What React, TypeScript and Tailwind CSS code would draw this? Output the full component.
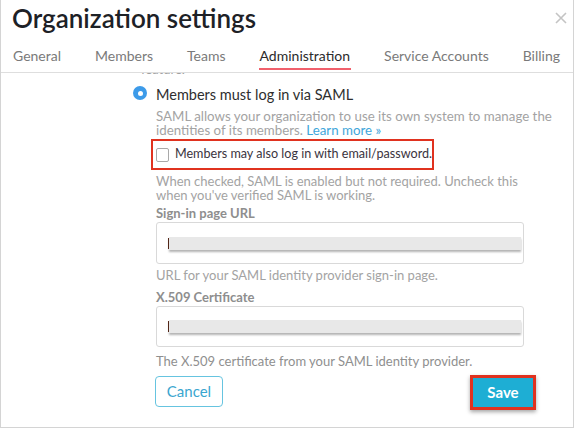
import React from "react";

function Redacted() {
  return (
    <div className="flex items-center h-full pl-[11px] pr-[2px]">
      <div className="w-[2px] h-[11px] bg-[#5a2a1a] mr-[-1px]" />
      <div className="flex-1 h-[13px] bg-[#e8e8e8] shadow-[0_2px_2px_rgba(0,0,0,0.3)] blur-[0.4px]" />
    </div>
  );
}

export default function App() {
  const tabs = ["General", "Members", "Teams", "Administration", "Service Accounts", "Billing"];
  return (
    <div className="w-[575px] h-[428px] bg-white overflow-hidden font-['Lato','Open_Sans',sans-serif]">
      <div className="w-[574px] h-[428px] border-l border-r border-b border-[#d4d4d4] flex flex-col">
        {/* header */}
        <div className="h-[40px] flex items-start justify-between pl-[11px] pr-[6px]">
          <h1 className="text-[26px] leading-[37px] font-semibold text-[#1d2126]">Organization settings</h1>
          <svg width="12" height="12" viewBox="0 0 12 12" className="mt-[12px]">
            <path d="M1 1 L11 11 M11 1 L1 11" stroke="#c4c4c4" strokeWidth="1.6" />
          </svg>
        </div>

        {/* tabs */}
        <div className="h-[33px] border-b border-[#dedede] flex items-start gap-[34px] pl-[12px] pt-[6px] text-[14px] text-[#7a7a7a]">
          {tabs.map((t) => (
            <div key={t} className={`relative leading-[20px] ${t === "Administration" ? "text-[#2b2b2b]" : ""}`}>
              {t}
              {t === "Administration" && (
                <div className="absolute left-[-1px] right-[-1px] top-[22px] h-[2px] bg-[#f0606c]" />
              )}
            </div>
          ))}
        </div>

        {/* scrolled content */}
        <div className="flex-1 overflow-hidden">
          <div className="pl-[140px] mt-[-11px] h-[14px] text-[13px] leading-[14px] text-[#a0a0a0]">feature.</div>

          <div className="flex mt-[9px]">
            <div className="w-[132px]" />
            <div className="w-[14px] h-[14px] rounded-full bg-[#3d9be9] flex items-center justify-center mt-[1px]">
              <div className="w-[5px] h-[5px] rounded-full bg-white" />
            </div>
            <div className="ml-[9px] w-[410px] flex flex-col">
              <div className="text-[14.5px] leading-[20px] text-[#2e2e2e]">Members must log in via SAML</div>
              <div className="mt-[4px] text-[13.3px] leading-[14px] text-[#a3a3a3]">
                SAML allows your organization to use its own system to manage the identities of its members.{" "}
                <span className="text-[#3fa6da]">Learn more »</span>
              </div>

              <div className="mt-[2px] ml-[-5px] w-[283px] h-[31px] border-[2.5px] border-[#e0321f] flex items-center pl-[3px]">
                <div className="w-[14px] h-[14px] border border-[#a9a9a9] rounded-[2px] bg-white" />
                <span className="ml-[6px] whitespace-nowrap text-[12.6px] text-[#3a3440]">Members may also log in with email/password.</span>
              </div>

              <div className="mt-[4px] w-[370px] text-[13px] leading-[14px] text-[#a3a3a3]">
                When checked, SAML is enabled but not required. Uncheck this when you've verified SAML is working.
              </div>

              <div className="mt-[4px] text-[13px] leading-[14px] font-bold text-[#8e8e8e]">Sign-in page URL</div>
              <div className="mt-[2px] w-[368px] h-[42px] border border-[#d9d9d9] rounded-[3px] bg-white">
                <Redacted />
              </div>
              <div className="mt-[4px] text-[13px] leading-[14px] text-[#a3a3a3]">URL for your SAML identity provider sign-in page.</div>

              <div className="mt-[8px] text-[13px] leading-[14px] font-bold text-[#8e8e8e]">X.509 Certificate</div>
              <div className="mt-[2px] w-[368px] h-[41px] border border-[#d9d9d9] rounded-[3px] bg-white">
                <Redacted />
              </div>
              <div className="mt-[7px] text-[13px] leading-[14px] text-[#8f8f8f]">The X.509 certificate from your SAML identity provider.</div>

              <div className="mt-[7px] ml-[-1px] w-[381px] flex items-start">
                <button className="w-[68px] h-[31px] mt-[1px] border-[1.5px] border-[#66c4e0] rounded-[4px] text-[15px] text-[#3aa6cf] bg-white">
                  Cancel
                </button>
                <div className="ml-auto w-[66px] h-[35px] border-[3px] border-[#e0321f] shadow-[0_2px_4px_rgba(0,0,0,0.35)]">
                  <div className="w-full h-full bg-[#1eaed4] flex items-center justify-center text-[15px] font-bold text-white">
                    Save
                  </div>
                </div>
              </div>
            </div>
          </div>
        </div>
      </div>
    </div>
  );
}
